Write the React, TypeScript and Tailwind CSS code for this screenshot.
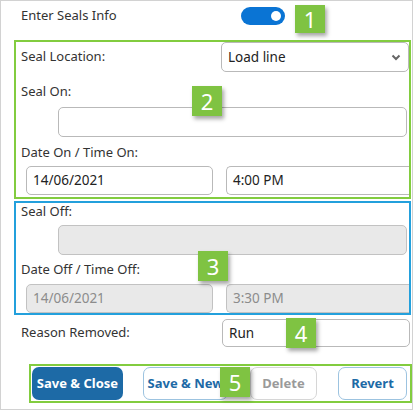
import React from "react";

const Badge = ({ n, className }: { n: string; className: string }) => (
  <div
    className={`absolute flex items-center justify-center bg-[#7fc342] text-white text-[22px] leading-none shadow-[2px_3px_4px_rgba(0,0,0,0.35)] ${className}`}
  >
    {n}
  </div>
);

const Field = ({
  value,
  disabled,
  className = "",
}: {
  value?: string;
  disabled?: boolean;
  className?: string;
}) => (
  <div
    className={`flex items-center rounded-[5px] border px-[6px] text-[13.5px] ${
      disabled
        ? "border-[#c2c2c2] bg-[#e9e9e9] text-[#8c8c8c]"
        : "border-[#b9b9b9] bg-white text-[#222]"
    } ${className}`}
  >
    {value}
  </div>
);

export default function App() {
  return (
    <div className="relative h-[410px] w-[413px] border border-[#d2d2d2] bg-white font-['Noto_Sans',sans-serif] text-[13px] text-[#333]">
      {/* header row */}
      <div className="flex h-[30px] items-center">
        <span className="w-[240px] pl-[20px]">Enter Seals Info</span>
        <div className="flex h-[18px] w-[44px] items-center justify-end rounded-full bg-[#0a74d4] pr-[4px]">
          <div className="h-[10px] w-[10px] rounded-full bg-white" />
        </div>
      </div>

      {/* seal on group */}
      <div className="ml-[13px] mt-[9px] w-[397px] border-2 border-[#82cc3f] pb-[2px]">
        <div className="flex h-[30px] items-center">
          <span className="flex-1 pl-[5px]">Seal Location:</span>
          <div className="flex h-[30px] w-[188px] items-center justify-between rounded-[5px] border border-[#b9b9b9] px-[6px] text-[13.5px] text-[#222]">
            Load line
            <svg width="10" height="7" viewBox="0 0 10 7" className="mr-[1px]">
              <path d="M1.5 1.5 L5 5 L8.5 1.5" fill="none" stroke="#666" strokeWidth="2" />
            </svg>
          </div>
        </div>
        <div className="mt-[10px] h-[18px] pl-[5px] leading-[18px]">Seal On:</div>
        <Field className="ml-[42px] mr-[2px] mt-[7px] h-[30px]" />
        <div className="mt-[6px] h-[18px] pl-[5px] leading-[18px]">Date On / Time On:</div>
        <div className="mt-[5px] flex gap-[13px] pl-[10px]">
          <Field value="14/06/2021" className="h-[29px] w-[187px]" />
          <Field value="4:00 PM" className="h-[29px] flex-1 rounded-r-none border-r-0" />
        </div>
      </div>

      {/* seal off group */}
      <div className="ml-[13px] mt-[2px] w-[397px] border-2 border-[#23a0dc]">
        <div className="h-[16px] pl-[5px] leading-[16px]">Seal Off:</div>
        <Field disabled className="ml-[42px] mr-[2px] mt-[6px] h-[30px]" />
        <div className="mt-[6px] h-[16px] pl-[5px] leading-[16px]">Date Off / Time Off:</div>
        <div className="mt-[7px] flex gap-[13px] pl-[10px]">
          <Field disabled value="14/06/2021" className="h-[29px] w-[187px]" />
          <Field disabled value="3:30 PM" className="h-[29px] flex-1 rounded-r-none border-r-0" />
        </div>
      </div>

      {/* reason */}
      <div className="mt-[4px] flex h-[28px] items-center">
        <span className="flex-1 pl-[20px]">Reason Removed:</span>
        <Field value="Run" className="mr-[2px] h-[28px] w-[188px]" />
      </div>

      {/* buttons */}
      <div className="ml-[28px] mt-[17px] flex h-[39px] w-[383px] items-start border-2 border-[#82cc3f] pl-[1px] pt-[1px] text-[13px] font-bold">
        <button className="h-[33px] w-[91px] rounded-[7px] bg-[#1d6aa6] text-white">Save &amp; Close</button>
        <button className="ml-[20px] h-[33px] w-[85px] rounded-[7px] border border-[#9cc3e0] bg-white text-[#1d6aa6]">
          Save &amp; New
        </button>
        <button className="ml-[22px] h-[33px] w-[67px] rounded-[7px] border border-[#d6d6d6] bg-white text-[#9a9a9a]">
          Delete
        </button>
        <button className="ml-[21px] h-[33px] w-[69px] rounded-[7px] border border-[#9cc3e0] bg-white text-[#1d6aa6]">
          Revert
        </button>
      </div>

      <Badge n="1" className="left-[294px] top-[4px] h-[28px] w-[30px]" />
      <Badge n="2" className="left-[191px] top-[85px] h-[30px] w-[30px]" />
      <Badge n="3" className="left-[197px] top-[250px] h-[30px] w-[30px]" />
      <Badge n="4" className="left-[285px] top-[317px] h-[30px] w-[30px]" />
      <Badge n="5" className="left-[219px] top-[366px] h-[30px] w-[30px]" />
    </div>
  );
}
